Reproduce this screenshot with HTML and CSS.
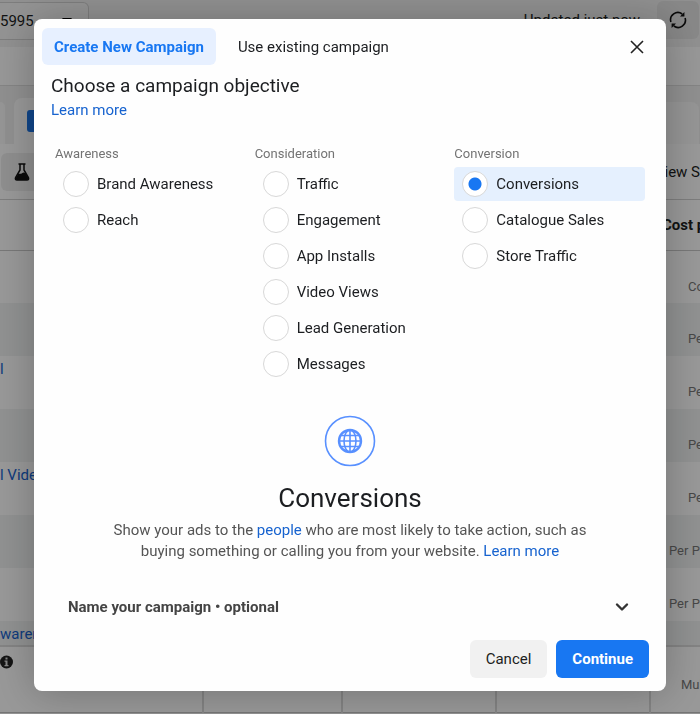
FILE: index.html
```html
<!DOCTYPE html>
<html lang="en">
<head>
    <meta charset="UTF-8">
    <meta name="viewport" content="width=device-width, initial-scale=1.0">
    <title>Create New Campaign</title>
    <link rel="stylesheet" href="styles.css">
</head>
<body>
    <div class="page">
        <div class="top-bar">
            <div class="account">
                <select class="account-select" aria-label="Account">
                    <option>5995.</option>
                </select>
                <svg class="account-caret" width="10" height="6" viewBox="0 0 10 6"><path d="M0 0h10L5 6z"/></svg>
            </div>
            <span class="updated">Updated just now</span>
            <button class="refresh" aria-label="Refresh">
                <svg width="18" height="18" viewBox="0 0 18 18" fill="none" stroke="#111" stroke-width="1.6">
                    <path d="M1.9 11A7.3 7.3 0 0 1 13.2 3M16.1 7A7.3 7.3 0 0 1 4.8 15"/>
                    <path d="M11 5.4h4.4V1zM7 12.6H2.6V17z" fill="#111" stroke="none"/>
                </svg>
            </button>
        </div>
        <div class="strip"></div>
        <div class="page-tabs">
            <div class="page-tab page-tab-first"></div>
            <div class="page-tab page-tab-active"><span class="tab-icon"></span></div>
            <div class="page-tab page-tab-last"></div>
        </div>
        <div class="toolbar">
            <button class="test-button" aria-label="A/B test">
                <svg width="16" height="18" viewBox="0 0 16 18">
                    <path d="M4.5 1h7M6 1v6L1.6 14.6Q.8 17 3 17h10q2.2 0 1.4-2.4L10 7V1" fill="none" stroke="#111" stroke-width="1.5"/>
                    <path d="M4.5 10.5q2 .8 3.5-.3t3.5-.2l3 5.2q.3 1.8-1.5 1.8H3q-1.8 0-1.5-1.8z" fill="#111"/>
                </svg>
            </button>
            <span class="view-setup">View S</span>
        </div>
        <table class="report">
            <colgroup>
                <col>
                <col class="col-small">
                <col class="col-wide">
                <col class="col-wide">
                <col class="col-cost">
            </colgroup>
            <thead>
                <tr><th></th><th></th><th></th><th></th><th>Cost p</th></tr>
            </thead>
            <tbody>
                <tr><td></td><td></td><td></td><td></td><td class="metric metric-short">Co</td></tr>
                <tr><td></td><td></td><td></td><td></td><td class="metric metric-short">Pe</td></tr>
                <tr><td><a href="#">l</a></td><td></td><td></td><td></td><td class="metric metric-short">Pe</td></tr>
                <tr><td></td><td></td><td></td><td></td><td class="metric metric-short">Pe</td></tr>
                <tr><td><a href="#">l Vide</a></td><td></td><td></td><td></td><td class="metric metric-short">Pe</td></tr>
                <tr><td></td><td></td><td></td><td></td><td class="metric">Per Pe</td></tr>
                <tr><td></td><td></td><td></td><td></td><td class="metric">Per Pe</td></tr>
                <tr class="row-cut"><td><a href="#">waren</a></td><td></td><td></td><td></td><td></td></tr>
            </tbody>
            <tfoot>
                <tr>
                    <td>
                        <svg width="14" height="14" viewBox="0 0 14 14">
                            <circle cx="6.5" cy="7" r="6.5" fill="#222"/>
                            <path d="M5.5 2.5h2v2h-2zM4.5 5.5h3v4.5h1v1.3h-4V10h1V6.8h-1z" fill="#ddd"/>
                        </svg>
                    </td>
                    <td></td><td></td><td></td><td class="total">Mul</td>
                </tr>
            </tfoot>
        </table>
    </div>

    <div class="overlay">
        <form class="modal" role="dialog" aria-labelledby="modal-title">
            <div class="modal-tabs">
                <button type="button" class="modal-tab active">Create New Campaign</button>
                <button type="button" class="modal-tab">Use existing campaign</button>
                <button type="button" class="close" aria-label="Close">
                    <svg width="14" height="14" viewBox="0 0 14 14" fill="none" stroke="#222" stroke-width="1.6">
                        <path d="M1 1l12 12M13 1L1 13"/>
                    </svg>
                </button>
            </div>

            <div class="intro">
                <h1 id="modal-title">Choose a campaign objective</h1>
                <a href="#">Learn more</a>
            </div>

            <div class="objectives">
                <fieldset>
                    <legend>Awareness</legend>
                    <label class="option"><input type="radio" name="objective">Brand Awareness</label>
                    <label class="option"><input type="radio" name="objective">Reach</label>
                </fieldset>
                <fieldset>
                    <legend>Consideration</legend>
                    <label class="option"><input type="radio" name="objective">Traffic</label>
                    <label class="option"><input type="radio" name="objective">Engagement</label>
                    <label class="option"><input type="radio" name="objective">App Installs</label>
                    <label class="option"><input type="radio" name="objective">Video Views</label>
                    <label class="option"><input type="radio" name="objective">Lead Generation</label>
                    <label class="option"><input type="radio" name="objective">Messages</label>
                </fieldset>
                <fieldset>
                    <legend>Conversion</legend>
                    <label class="option selected"><input type="radio" name="objective" checked>Conversions</label>
                    <label class="option"><input type="radio" name="objective">Catalogue Sales</label>
                    <label class="option"><input type="radio" name="objective">Store Traffic</label>
                </fieldset>
            </div>

            <div class="detail">
                <svg class="globe" width="52" height="52" viewBox="0 0 52 52" fill="none" stroke="#5890ff">
                    <circle cx="26" cy="26" r="24.5" stroke-width="1.6"/>
                    <circle cx="26" cy="26" r="11" stroke-width="2.4"/>
                    <ellipse cx="26" cy="26" rx="6" ry="11" stroke-width="1.6"/>
                    <path d="M26 15v22M15 26h22M17 20.5h18M17 31.5h18" stroke-width="1.6"/>
                </svg>
                <h2>Conversions</h2>
                <p>Show your ads to the <a href="#">people</a> who are most likely to take action, such as buying something or calling you from your website. <a href="#">Learn more</a></p>
            </div>

            <button type="button" class="name-toggle">
                Name your campaign • optional
                <svg width="14" height="10" viewBox="0 0 14 10" fill="none" stroke="#333" stroke-width="2.4" stroke-linecap="round" stroke-linejoin="round">
                    <path d="M2 2.5l5 5 5-5"/>
                </svg>
            </button>

            <div class="actions">
                <button type="button" class="button">Cancel</button>
                <button type="submit" class="button primary">Continue</button>
            </div>
        </form>
    </div>
</body>
</html>
```

FILE: styles.css
```css
* {
    box-sizing: border-box;
}

body {
    margin: 0;
    font-family: Roboto, "Liberation Sans", sans-serif;
    font-size: 15px;
    line-height: 20px;
    color: #1c1e21;
    background: #f5f5f5;
}

button,
select,
input {
    font: inherit;
    color: inherit;
}

button {
    border: none;
    background: none;
    padding: 0;
    cursor: pointer;
}

a {
    color: #1763cf;
    text-decoration: none;
}

svg {
    display: block;
    flex: none;
}

/* Page behind the dialog */
.page {
    height: 100vh;
    overflow: hidden;
}

.top-bar {
    display: flex;
    align-items: center;
    height: 47px;
    padding: 0 1px 7px 0;
    background: #f0f0f0;
}

.account {
    position: relative;
    width: 89px;
    margin-top: 1px;
}

.account-select {
    appearance: none;
    width: 100%;
    height: 38px;
    padding: 0;
    border: 1px solid #d0d0d0;
    border-left: none;
    border-radius: 0 6px 6px 0;
    background: #f5f5f5;
}

.account-caret {
    position: absolute;
    top: 16px;
    right: 17px;
}

.updated {
    margin-left: auto;
    margin-right: 17px;
}

.refresh {
    display: flex;
    align-items: center;
    justify-content: center;
    width: 42px;
    height: 38px;
    border-radius: 6px;
    background: #e2e2e2;
}

.strip {
    height: 39px;
    border-bottom: 1px solid #dcdcdc;
    background: #fcfcfc;
}

.page-tabs {
    display: flex;
    align-items: flex-end;
    gap: 9px;
    height: 58px;
    padding-right: 1px;
    background: #efefef;
}

.page-tab {
    flex: 1;
    height: 42px;
    border-radius: 8px 8px 0 0;
    background: #f8f8f8;
}

.page-tab-first {
    flex: none;
    width: 5px;
    border-top-left-radius: 0;
}

.page-tab-active {
    height: 46px;
    padding: 12px 13px;
    background: #fdfdfd;
}

.tab-icon {
    display: block;
    width: 22px;
    height: 22px;
    border-radius: 3px;
    background: #1b74e4;
}

.toolbar {
    display: flex;
    align-items: center;
    justify-content: space-between;
    height: 56px;
    padding-left: 1px;
    border-bottom: 1px solid #d0d0d0;
    background: #fdfdfd;
}

.test-button {
    display: flex;
    align-items: center;
    width: 60px;
    height: 38px;
    padding-left: 13px;
    border-radius: 6px;
    background: #ededed;
}

.report {
    width: 100%;
    table-layout: fixed;
    border-collapse: collapse;
    background: #fdfdfd;
}

.report th,
.report td {
    padding: 0;
    white-space: nowrap;
    vertical-align: top;
}

.col-small {
    width: 139px;
}

.col-wide {
    width: 154px;
}

.col-cost {
    width: 50px;
}

.report thead th {
    height: 50px;
    padding-left: 12px;
    border-bottom: 1px solid #c8c8c8;
    text-align: left;
    vertical-align: middle;
}

.report tbody tr {
    height: 53px;
}

.report tbody tr:nth-child(even) {
    background: #f0f2f2;
}

.report tbody td {
    padding-top: 3px;
}

.report tbody .metric {
    padding-top: 26px;
    padding-left: 19px;
    font-size: 13px;
    color: #777;
}

.report tbody .metric-short {
    padding-left: 38px;
}

.report tbody .row-cut {
    height: 25px;
}

.report tfoot td {
    height: 66px;
    padding-top: 8px;
    border-top: 2px solid #dadada;
    border-bottom: 1px solid #c4c4c4;
    border-right: 2px solid #dadada;
}

.report tfoot .total {
    padding-top: 28px;
    padding-left: 30px;
    border-right: none;
    font-size: 13px;
    color: #777;
}

/* Dialog */
.overlay {
    position: fixed;
    inset: 0;
    display: flex;
    align-items: flex-start;
    padding: 19px 34px;
    background: rgba(0, 0, 0, 0.4);
}

.modal {
    width: 100%;
    padding-bottom: 13px;
    border-radius: 8px;
    background: #fefefe;
    box-shadow: 0 2px 40px rgba(0, 0, 0, 0.25);
}

.modal-tabs {
    display: flex;
    gap: 10px;
    padding: 9px 11px 0 8px;
}

.modal-tab {
    height: 37px;
    padding: 0 12px;
    border-radius: 6px;
}

.modal-tab.active {
    background: #e7f0ff;
    color: #1877f2;
    font-weight: bold;
}

.close {
    display: flex;
    align-items: center;
    justify-content: center;
    width: 36px;
    margin-left: auto;
}

.intro {
    padding: 8px 17px 0;
}

.intro h1 {
    margin: 0 0 1px;
    font-size: 19px;
    font-weight: normal;
    line-height: 26px;
}

.objectives {
    display: grid;
    grid-template-columns: repeat(3, 1fr);
    gap: 9px;
    padding: 24px 21px 0;
}

.objectives fieldset {
    display: flex;
    flex-direction: column;
    gap: 2px;
    min-width: 0;
    margin: 0;
    padding: 3px 0 0;
    border: none;
}

.objectives legend {
    padding: 0;
    font-size: 13px;
    color: #737373;
}

.option {
    display: flex;
    align-items: center;
    gap: 8px;
    height: 34px;
    padding-left: 8px;
    border-radius: 4px;
}

.option.selected {
    background: #e5f0fe;
}

.option input {
    appearance: none;
    width: 26px;
    height: 26px;
    margin: 0;
    border: 1px solid #d8d8d8;
    border-radius: 50%;
    background: #fff;
}

.option input:checked {
    background: radial-gradient(circle, #1877f2 6px, #fff 7px);
}

.detail {
    padding: 34px 76px 0;
    text-align: center;
}

.globe {
    margin: 0 auto;
}

.detail h2 {
    margin: 15px 0 6px;
    font-size: 26px;
    font-weight: normal;
    line-height: 32px;
}

.detail p {
    margin: 0;
    line-height: 21px;
    color: #555;
}

.name-toggle {
    display: flex;
    align-items: center;
    justify-content: space-between;
    width: 100%;
    height: 36px;
    margin-top: 27px;
    padding: 0 37px 0 34px;
    font-weight: bold;
    color: #444;
}

.actions {
    display: flex;
    justify-content: flex-end;
    gap: 9px;
    padding: 15px 17px 0;
}

.button {
    height: 38px;
    padding: 0 16px;
    border-radius: 6px;
    background: #f1f1f1;
}

.button.primary {
    background: #1877f2;
    color: #fff;
    font-weight: bold;
}
```
